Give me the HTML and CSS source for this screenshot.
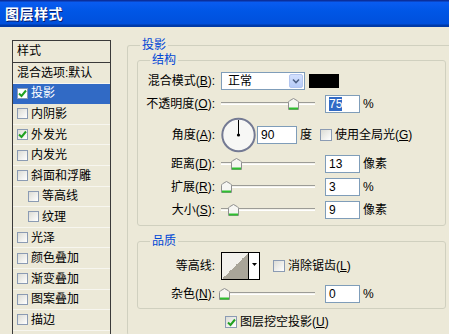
FILE: index.html
```html
<!DOCTYPE html>
<html lang="zh-CN">
<head>
    <meta charset="UTF-8">
    <title>图层样式</title>
    <link rel="stylesheet" href="styles.css">
</head>
<body>
    <div class="titlebar"><span class="title">图层样式</span></div>

    <div class="dialog">
        <div class="style-list">
            <div class="list-head">样式</div>
            <div class="list-item">混合选项:默认</div>
            <div class="list-item selected"><span class="cb"><svg width="9" height="9" viewBox="0 0 9 9"><path d="M1 4.5 L3.5 7 L8 1.5" fill="none" stroke="#21a121" stroke-width="2"/></svg></span>投影</div>
            <div class="list-item"><span class="cb"></span>内阴影</div>
            <div class="list-item"><span class="cb"><svg width="9" height="9" viewBox="0 0 9 9"><path d="M1 4.5 L3.5 7 L8 1.5" fill="none" stroke="#21a121" stroke-width="2"/></svg></span>外发光</div>
            <div class="list-item"><span class="cb"></span>内发光</div>
            <div class="list-item"><span class="cb"></span>斜面和浮雕</div>
            <div class="list-item sub"><span class="cb"></span>等高线</div>
            <div class="list-item sub"><span class="cb"></span>纹理</div>
            <div class="list-item"><span class="cb"></span>光泽</div>
            <div class="list-item"><span class="cb"></span>颜色叠加</div>
            <div class="list-item"><span class="cb"></span>渐变叠加</div>
            <div class="list-item"><span class="cb"></span>图案叠加</div>
            <div class="list-item"><span class="cb"></span>描边</div>
        </div>

        <fieldset class="group outer">
            <legend>投影</legend>

            <fieldset class="group section">
                <legend>结构</legend>
                <div class="row">
                    <span class="label">混合模式(<u>B</u>):</span>
                    <div class="select">
                        <span class="value">正常</span>
                        <span class="arrow"><svg width="8" height="6" viewBox="0 0 8 6"><path d="M1 1.5 L4 4.5 L7 1.5" fill="none" stroke="#4d6185" stroke-width="1.6"/></svg></span>
                    </div>
                    <span class="swatch"></span>
                </div>
                <div class="row">
                    <span class="label">不透明度(<u>O</u>):</span>
                    <div class="slider"><span class="thumb" style="left: 67px"><svg width="11" height="12" viewBox="0 0 11 12"><path d="M0.5 11.5 V4.5 Q0.5 3.5 1.5 2.8 L5.5 0.5 L9.5 2.8 Q10.5 3.5 10.5 4.5 V11.5 Z" fill="#f6f6f2" stroke="#8e8f8f"/><path d="M1 10.5 H10" stroke="#2fbf2f" stroke-width="2"/></svg></span></div>
                    <span class="field"><span class="sel">75</span></span>
                    <span class="unit">%</span>
                </div>
                <div class="row angle">
                    <span class="label">角度(<u>A</u>):</span>
                    <svg class="dial" width="35" height="36" viewBox="0 0 35 36"><circle cx="17.5" cy="18" r="16.2" fill="#f7f7f5" stroke="#747a93" stroke-width="2"/><path d="M17.5 18 V3" stroke="#000" stroke-width="1"/><circle cx="17.5" cy="18" r="1.6" fill="#000"/></svg>
                    <span class="field wide">90</span>
                    <span class="unit">度</span>
                    <span class="cb global"></span>
                    <span>使用全局光(<u>G</u>)</span>
                </div>
                <div class="row after-angle">
                    <span class="label">距离(<u>D</u>):</span>
                    <div class="slider"><span class="thumb" style="left: 10px"><svg width="11" height="12" viewBox="0 0 11 12"><path d="M0.5 11.5 V4.5 Q0.5 3.5 1.5 2.8 L5.5 0.5 L9.5 2.8 Q10.5 3.5 10.5 4.5 V11.5 Z" fill="#f6f6f2" stroke="#8e8f8f"/><path d="M1 10.5 H10" stroke="#2fbf2f" stroke-width="2"/></svg></span></div>
                    <span class="field">13</span>
                    <span class="unit">像素</span>
                </div>
                <div class="row">
                    <span class="label">扩展(<u>R</u>):</span>
                    <div class="slider"><span class="thumb" style="left: 0px"><svg width="11" height="12" viewBox="0 0 11 12"><path d="M0.5 11.5 V4.5 Q0.5 3.5 1.5 2.8 L5.5 0.5 L9.5 2.8 Q10.5 3.5 10.5 4.5 V11.5 Z" fill="#f6f6f2" stroke="#8e8f8f"/><path d="M1 10.5 H10" stroke="#2fbf2f" stroke-width="2"/></svg></span></div>
                    <span class="field">3</span>
                    <span class="unit">%</span>
                </div>
                <div class="row">
                    <span class="label">大小(<u>S</u>):</span>
                    <div class="slider"><span class="thumb" style="left: 7px"><svg width="11" height="12" viewBox="0 0 11 12"><path d="M0.5 11.5 V4.5 Q0.5 3.5 1.5 2.8 L5.5 0.5 L9.5 2.8 Q10.5 3.5 10.5 4.5 V11.5 Z" fill="#f6f6f2" stroke="#8e8f8f"/><path d="M1 10.5 H10" stroke="#2fbf2f" stroke-width="2"/></svg></span></div>
                    <span class="field">9</span>
                    <span class="unit">像素</span>
                </div>
            </fieldset>

            <fieldset class="group section quality">
                <legend>品质</legend>
                <div class="row contour-row">
                    <span class="label">等高线:</span>
                    <div class="contour">
                        <span class="preview"></span>
                        <span class="drop"><svg width="5" height="3" viewBox="0 0 5 3"><path d="M0 0 H5 L2.5 3 Z" fill="#000"/></svg></span>
                    </div>
                    <span class="cb anti"></span>
                    <span>消除锯齿(<u>L</u>)</span>
                </div>
                <div class="row">
                    <span class="label">杂色(<u>N</u>):</span>
                    <div class="slider"><span class="thumb" style="left: -2px"><svg width="11" height="12" viewBox="0 0 11 12"><path d="M0.5 11.5 V4.5 Q0.5 3.5 1.5 2.8 L5.5 0.5 L9.5 2.8 Q10.5 3.5 10.5 4.5 V11.5 Z" fill="#f6f6f2" stroke="#8e8f8f"/><path d="M1 10.5 H10" stroke="#2fbf2f" stroke-width="2"/></svg></span></div>
                    <span class="field">0</span>
                    <span class="unit">%</span>
                </div>
            </fieldset>

            <div class="knockout">
                <span class="cb"><svg width="9" height="9" viewBox="0 0 9 9"><path d="M1 4.5 L3.5 7 L8 1.5" fill="none" stroke="#21a121" stroke-width="2"/></svg></span>
                <span>图层挖空投影(<u>U</u>)</span>
            </div>
        </fieldset>
    </div>
</body>
</html>
```

FILE: styles.css
```css
* {
    box-sizing: border-box;
}
body {
    margin: 0;
    width: 449px;
    height: 334px;
    overflow: hidden;
    background-color: #ece9d8;
    font-family: "Liberation Sans", "Noto Sans CJK SC", sans-serif;
    font-size: 12px;
    line-height: 14px;
    color: #000;
}
u {
    text-decoration: underline;
}
.titlebar {
    height: 27px;
    display: flex;
    align-items: center;
    padding-left: 5px;
    background: linear-gradient(#0a2f9c 0, #0a2f9c 1px, #0a5cf0 2px, #0056e6 40%, #0050dc 24px, #003aa8 25px, #003aa8 27px);
}
.title {
    color: white;
    font-weight: bold;
    font-size: 14px;
    letter-spacing: 0.5px;
    text-shadow: 1px 1px #0a1e6e;
}
.dialog {
    display: flex;
    align-items: flex-start;
    gap: 16px;
    padding: 11px 0 0 12px;
}

/* style list */
.style-list {
    width: 99px;
    height: 295px;
    margin-top: 2px;
    flex-shrink: 0;
    overflow: hidden;
    border: 1px solid #3a3a3a;
    border-bottom: none;
}
.list-head {
    height: 22px;
    line-height: 21px;
    padding-left: 4px;
    border-bottom: 1px solid #3a3a3a;
}
.list-item {
    height: 20.6px;
    display: flex;
    align-items: center;
    gap: 3px;
    padding-left: 4px;
    border-bottom: 1px solid #f7f6ef;
    white-space: nowrap;
}
.list-item.sub {
    padding-left: 15px;
}
.list-item.selected {
    background-color: #316ac5;
    color: white;
    border-bottom-color: #316ac5;
}
.cb {
    width: 12px;
    height: 12px;
    flex-shrink: 0;
    display: inline-flex;
    align-items: center;
    justify-content: center;
    border: 1px solid #8b9bb3;
    background: linear-gradient(135deg, #dcdcd5, #ffffff);
}
.list-item .cb {
    width: 11px;
    height: 11px;
}
.selected .cb {
    background: white;
}

/* group boxes */
.group {
    margin: 0;
    border: 1px solid #d0d0bf;
    border-radius: 3px;
}
.group legend {
    padding: 0 2px;
    line-height: 14px;
    color: #0046d5;
}
.outer {
    width: 330px;
    height: 297px;
    flex-shrink: 0;
    overflow: hidden;
    padding: 1px 0 0 9px;
    border-bottom: none;
}
.outer > legend {
    margin-left: 3px;
}
.section {
    width: 309px;
    padding: 0 0 6px 0;
}
.section > legend {
    margin-left: 12px;
}
.quality {
    margin-top: 8px;
    padding-bottom: 5px;
}

/* rows */
.row {
    display: flex;
    align-items: center;
    height: 18px;
    margin-top: 5px;
    white-space: nowrap;
}
.row.angle {
    height: 36px;
    margin-top: 4px;
}
.row.after-angle {
    margin-top: 2px;
}
.row.contour-row {
    height: 28px;
    margin-top: 4px;
}
.label {
    width: 77px;
    margin-right: 6px;
    flex-shrink: 0;
    text-align: right;
}
.select {
    width: 84px;
    height: 18px;
    display: flex;
    align-items: center;
    padding: 1px;
    border: 1px solid #7f9db9;
    background-color: white;
}
.select .value {
    flex: 1;
    padding-left: 5px;
}
.select .arrow {
    width: 14px;
    height: 14px;
    display: flex;
    align-items: center;
    justify-content: center;
    border: 1px solid #b3c6ef;
    border-radius: 2px;
    background: linear-gradient(#d3e0fd, #b6cbf7);
}
.swatch {
    width: 30px;
    height: 14px;
    margin-left: 4px;
    background-color: #000;
}
.slider {
    position: relative;
    width: 94px;
    height: 18px;
    margin-right: 10px;
    flex-shrink: 0;
    background: linear-gradient(transparent 7px, #9c9c96 7px, #9c9c96 8px, #f3f2ec 8px, #f3f2ec 9px, #ffffff 9px, #ffffff 10px, transparent 10px);
}
.thumb {
    position: absolute;
    top: 3px;
    display: block;
    line-height: 0;
}
.field {
    width: 35px;
    height: 18px;
    flex-shrink: 0;
    padding-left: 3px;
    line-height: 16px;
    border: 1px solid #7f9db9;
    background-color: white;
}
.field.wide {
    width: 40px;
}
.sel {
    background-color: #316ac5;
    color: white;
}
.unit {
    margin-left: 3px;
}
.dial {
    margin-right: 1px;
    flex-shrink: 0;
}
.cb.global {
    margin: 0 3px 0 8px;
}
.contour {
    width: 39px;
    height: 28px;
    display: flex;
    border: 1px solid #000;
}
.contour .preview {
    width: 27px;
    border-right: 1px solid #000;
    background: linear-gradient(to top left, #a9a599 50%, #f2f1ec 50%);
}
.contour .drop {
    flex: 1;
    display: flex;
    justify-content: center;
    padding-top: 10px;
    background-color: white;
}
.cb.anti {
    margin: 0 3px 0 13px;
}
.knockout {
    height: 16px;
    margin-top: 5px;
    display: flex;
    align-items: center;
    gap: 3px;
    padding-left: 88px;
}
```
